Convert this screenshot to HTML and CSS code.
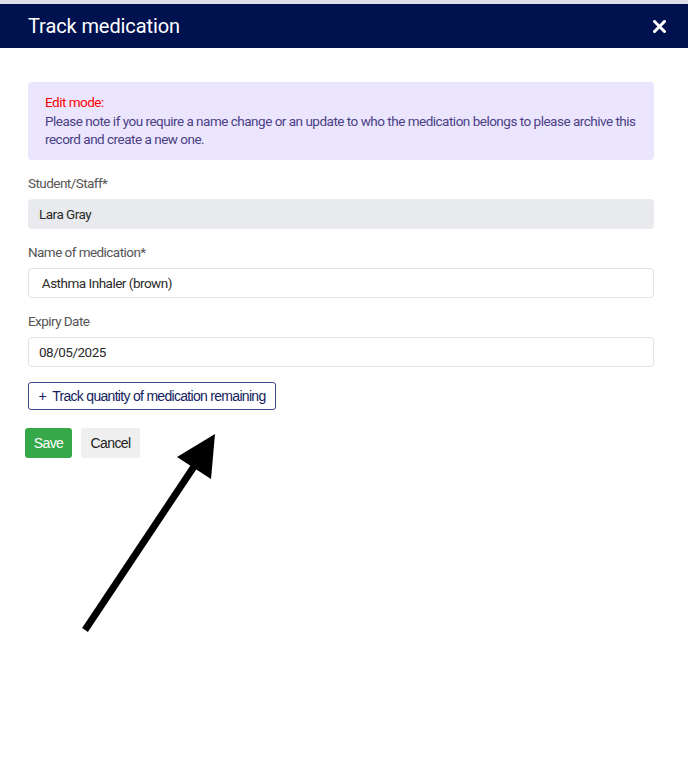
FILE: index.html
```html
<!DOCTYPE html>
<html>
<head>
<meta charset="utf-8">
<link rel="stylesheet" href="styles.css">
</head>
<body>
<div class="topline"></div>
<header class="modal-header">
  <h1 class="title">Track medication</h1>
  <svg class="close" width="13" height="13" viewBox="0 0 13 13"><path d="M1.5 1.5 L11.5 11.5 M11.5 1.5 L1.5 11.5" stroke="#fff" stroke-width="3" stroke-linecap="square"/></svg>
</header>
<main class="content">
  <div class="alert">
    <div class="alert-title">Edit mode:</div>
    <div>Please note if you require a name change or an update to who the medication belongs to please archive this record and create a new one.</div>
  </div>
  <label class="label">Student/Staff*</label>
  <div class="input disabled">Lara Gray</div>
  <label class="label">Name of medication*</label>
  <div class="input">&nbsp;Asthma Inhaler (brown)</div>
  <label class="label">Expiry Date</label>
  <div class="input">08/05/2025</div>
  <button class="track-btn">+&nbsp; Track quantity of medication remaining</button>
  <div class="actions">
    <button class="btn save">Save</button>
    <button class="btn cancel">Cancel</button>
  </div>
</main>
<svg class="arrow" width="688" height="776" viewBox="0 0 688 776">
  <line x1="85" y1="630" x2="197" y2="462" stroke="#000" stroke-width="7"/>
  <polygon points="215,434 177,457 211,479" fill="#000"/>
</svg>
</body>
</html>
```
FILE: styles.css
```css
html, body {
  margin: 0;
  padding: 0;
  background: #fff;
  font-family: Roboto, "Liberation Sans", sans-serif;
}
body {
  position: relative;
  width: 688px;
  height: 776px;
  overflow: hidden;
}
.topline {
  height: 4px;
  background: #dfe0e6;
}
.modal-header {
  height: 44px;
  background: #001150;
  display: flex;
  align-items: center;
  justify-content: space-between;
  padding: 0 22px 0 28px;
}
.title {
  margin: 0;
  color: #fff;
  font-size: 20px;
  font-weight: 400;
  letter-spacing: -0.1px;
}
.close {
  display: block;
}
.content {
  padding: 34px 34px 0 28px;
  display: flex;
  flex-direction: column;
  align-items: stretch;
}
.alert {
  background: #ebe6fd;
  border-radius: 4px;
  padding: 11px 8px 11px 17px;
  font-size: 13.5px;
  letter-spacing: -0.5px;
  line-height: 18.5px;
  color: #4b3f86;
}
.alert-title {
  color: #ff0000;
}
.label {
  margin-top: 14px;
  font-size: 13.5px;
  letter-spacing: -0.55px;
  line-height: 18px;
  color: #555;
}
.input {
  margin-top: 7px;
  height: 30px;
  box-sizing: border-box;
  border: 1px solid #e2e2e2;
  border-radius: 4px;
  padding: 0 10px;
  display: flex;
  align-items: center;
  font-size: 13.5px;
  letter-spacing: -0.5px;
  color: #2a2a2a;
}
.input.disabled {
  background: #e9eaee;
  border-color: #e9eaee;
}
.track-btn {
  align-self: flex-start;
  margin-top: 15px;
  height: 28px;
  width: 248px;
  box-sizing: border-box;
  background: #fff;
  border: 1px solid #3d4a88;
  border-radius: 3px;
  color: #13215f;
  font-family: "Liberation Sans", Arial, sans-serif;
  font-size: 14px;
  letter-spacing: -0.7px;
  padding: 0;
}
.actions {
  display: flex;
  gap: 9px;
  margin-top: 18px;
  margin-left: -3px;
}
.btn {
  height: 30px;
  border: none;
  border-radius: 3px;
  font-family: "Liberation Sans", Arial, sans-serif;
  font-size: 14px;
  letter-spacing: -0.6px;
  padding: 0;
}
.save {
  width: 47px;
  background: #36a84a;
  color: #fff;
}
.cancel {
  width: 59px;
  background: #efefef;
  color: #222;
}
.arrow {
  position: absolute;
  left: 0;
  top: 0;
  pointer-events: none;
}
```
